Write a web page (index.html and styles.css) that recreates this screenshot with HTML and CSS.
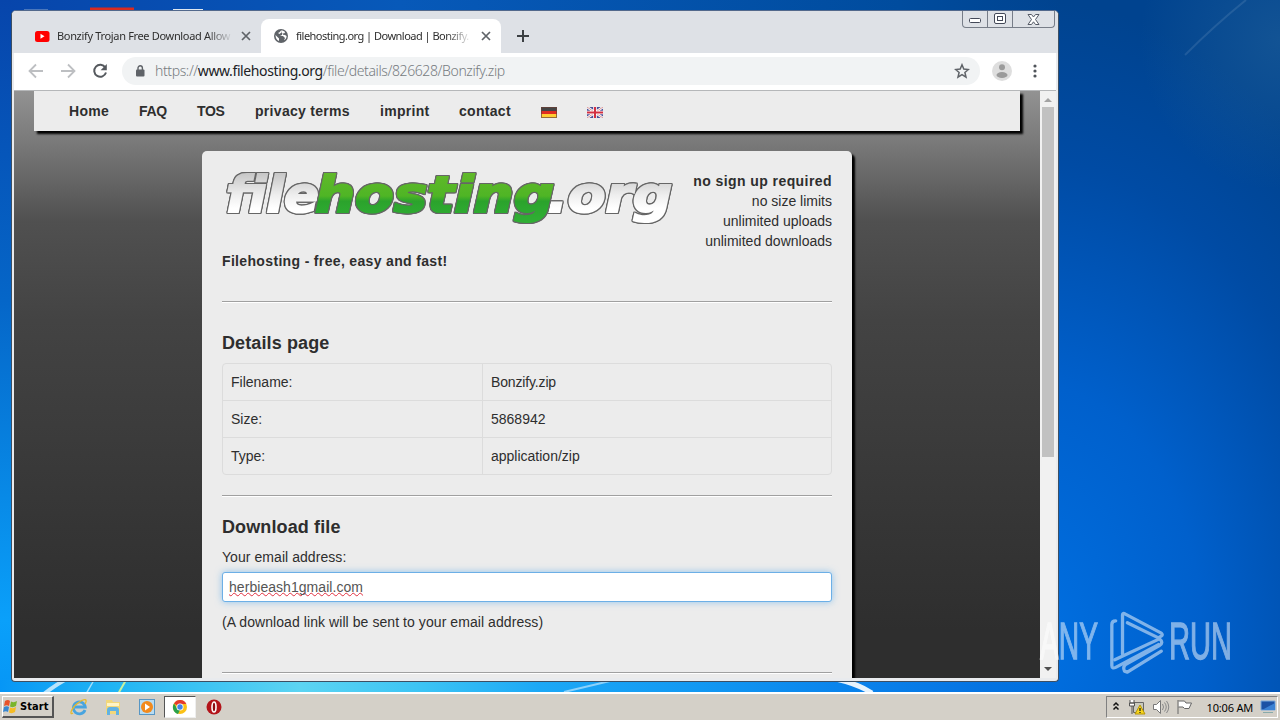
FILE: index.html
```
<!DOCTYPE html>
<html lang="en">
	<head>
		<meta charset="utf-8">
		<title>filehosting.org | Download | Bonzify.zip</title>
		<link rel="stylesheet" href="styles.css">
	</head>
	<body>
		<div class="desktop">
			<svg class="wallpaper" width="1280" height="692" viewBox="0 0 1280 692">
				<g fill="none" stroke="#fff">
					<path d="M44 694Q55 685 72 676" stroke-width="4" opacity=".7"/>
					<path d="M86 694L94 680" stroke-width="1.5" opacity=".6"/>
					<path d="M118 694L126 680" stroke="#c8f0a0" stroke-width="2"/>
					<path d="M564 692L610 681" stroke-width="2" opacity=".5"/>
					<path d="M836 679Q858 684 872 693" stroke-width="5" opacity=".9"/>
					<path d="M1185 55Q1215 25 1246 0" stroke-width="2" opacity=".1"/>
				</g>
				<path d="M24 10h24" stroke="#8fa9cc"/>
				<path d="M173 10h30" stroke="#dfe8f0" stroke-width="2"/>
				<path d="M90 9h44" stroke="#d92b20" stroke-width="3"/>
			</svg>
			<div class="window">
				<div class="titlebar">
					<div class="tab">
						<svg width="16" height="16" viewBox="0 0 16 16"><rect x="1" y="3" width="14.500" height="11" rx="2.500" fill="#f00"/><path d="M6.500 5.800v5l4-2.500z" fill="#fff"/></svg>
						<span class="tab-title first">Bonzify Trojan Free Download Allow</span>
						<svg width="10" height="10" viewBox="0 0 10 10"><path d="M1 1l8 8M9 1l-8 8" stroke="#5f6368" stroke-width="1.700"/></svg>
					</div>
					<div class="tab active">
						<svg width="16" height="16" viewBox="0 0 16 16"><circle cx="8" cy="8" r="7" fill="#5f6368"/><path d="M2.500 7l2.500 2.500 1 1v2.500c-2-.6-3.500-2.700-3.500-6zM8 2.500c2 0 3.300.6 4.200 1.800L11 5.500 9 5v2L7 8h3l2 2-1 2.300c1.800-1 2.600-2.400 2.600-4.300l-1.600-1-2-.3M8 2.500L6.500 4.200 5 5l1.500 1L9 4z" fill="#fff"/></svg>
						<span class="tab-title">filehosting.org | Download | Bonzify.</span>
						<svg class="tab-close" width="10" height="10" viewBox="0 0 10 10"><path d="M1 1l8 8M9 1l-8 8" stroke="#5f6368" stroke-width="1.700"/></svg>
					</div>
					<svg class="plus" width="12" height="12" viewBox="0 0 12 12"><path d="M6 0v12M0 6h12" stroke="#3c4043" stroke-width="2"/></svg>
					<div class="controls">
						<span class="ctl"><svg width="12" height="6"><rect x=".5" y=".5" width="11" height="4" rx="1" fill="#fff" stroke="#444958"/></svg></span>
						<span class="ctl"><svg width="12" height="12"><rect x=".5" y=".5" width="11" height="10" rx="1.500" fill="#fff" stroke="#444958"/><rect x="3.500" y="3.500" width="5" height="4" fill="#fff" stroke="#444958"/></svg></span>
						<span class="ctl close"><svg width="13" height="11" viewBox="0 0 13 11"><path d="M1 .5h3.500l2 2.500 2-2.500H12L8.500 5.500l3.500 5H8.500l-2-2.700-2 2.700H1l3.500-5z" fill="#fff" stroke="#555a66"/></svg></span>
					</div>
				</div>
				<div class="toolbar">
					<svg class="nav-icon" width="16" height="16" viewBox="0 0 16 16"><path d="M15 8H2M8 1.500L1.500 8 8 14.500" fill="none" stroke="#bdbfc2" stroke-width="1.800"/></svg>
					<svg class="nav-icon" width="16" height="16" viewBox="0 0 16 16"><path d="M1 8h13M8 1.500L14.500 8 8 14.500" fill="none" stroke="#bdbfc2" stroke-width="1.800"/></svg>
					<svg class="nav-icon" width="16" height="16" viewBox="0 0 16 16"><path d="M13.300 4.500A6 6 0 1 0 14 9.500" fill="none" stroke="#55595e" stroke-width="2"/><path d="M14.800 1v6.200H8.600z" fill="#55595e"/></svg>
					<div class="address">
						<svg width="10" height="12" viewBox="0 0 10 12"><rect x="1" y="4.500" width="8.500" height="7" rx="1" fill="#5f6368"/><path d="M3 5V3a2.200 2.200 0 0 1 4.400 0v2" fill="none" stroke="#5f6368" stroke-width="1.400"/></svg>
						<span class="url">https://<b>www.filehosting.org</b>/file/details/826628/Bonzify.zip</span>
						<svg class="star" width="16" height="16" viewBox="0 0 16 16"><path d="M8 1.800l1.800 4.300 4.600.4-3.500 3 1.100 4.600-4-2.500-4 2.500 1.100-4.600-3.500-3 4.600-.4z" fill="none" stroke="#5f6368" stroke-width="1.500"/></svg>
					</div>
					<svg class="avatar" width="20" height="20" viewBox="0 0 20 20"><circle cx="10" cy="10" r="10" fill="#dedede"/><circle cx="10" cy="6.300" r="3" fill="#9b9b9b"/><ellipse cx="10" cy="14" rx="5.500" ry="3" fill="#9b9b9b"/></svg>
					<svg class="more" width="4" height="14" viewBox="0 0 4 14"><g fill="#50545a"><circle cx="2" cy="2" r="1.600"/><circle cx="2" cy="7" r="1.600"/><circle cx="2" cy="12" r="1.600"/></g></svg>
				</div>
				<div class="viewport">
					<div class="page">
						<ul class="menu">
							<li class="m1">Home</li>
							<li class="m2">FAQ</li>
							<li class="m2">TOS</li>
							<li class="m4">privacy terms</li>
							<li class="m5">imprint</li>
							<li class="m6">contact</li>
							<li class="flag"><svg width="16" height="11"><path d="M0 0h16v4H0z" fill="#444"/><path d="M0 4h16v3H0z" fill="#e02c20"/><path d="M0 7h16v4H0z" fill="#fc3"/><rect x=".5" y=".5" width="15" height="10" fill="none" stroke="#6b4036" opacity=".7"/></svg></li>
							<li class="flag"><svg width="16" height="11" viewBox="0 0 16 11"><path d="M0 0h16v11H0z" fill="#4a4f96"/><path d="M0 0l16 11M16 0L0 11" stroke="#fff" stroke-width="2.500"/><path d="M0 0l16 11M16 0L0 11" stroke="#c77" stroke-width=".8"/><path d="M8 0v11M0 5.500h16" stroke="#fff" stroke-width="3.600"/><path d="M8 0v11M0 5.500h16" stroke="#d22f40" stroke-width="2"/></svg></li>
						</ul>
						<div class="content">
							<div class="head">
								<svg class="logo" width="455" height="60" viewBox="0 0 455 60">
									<defs>
										<linearGradient id="silver" gradientUnits="userSpaceOnUse" x1="0" y1="2" x2="0" y2="46"><stop offset="0" stop-color="#c6c6c6"/><stop offset=".5" stop-color="#eee"/><stop offset=".8" stop-color="#fff"/></linearGradient>
										<linearGradient id="green" gradientUnits="userSpaceOnUse" x1="0" y1="0" x2="0" y2="52"><stop offset="0" stop-color="#62b92a"/><stop offset=".48" stop-color="#4fb525"/><stop offset=".58" stop-color="#2ba32c"/><stop offset="1" stop-color="#30b035"/></linearGradient>
									</defs>
									<text class="logo-text" x="4" y="41" textLength="93" lengthAdjust="spacingAndGlyphs" fill="url(#silver)" stroke="url(#silver)">file</text>
									<text class="logo-text" x="325" y="41" textLength="125" lengthAdjust="spacingAndGlyphs" fill="url(#silver)" stroke="url(#silver)">.org</text>
									<text class="logo-text" x="93" y="41" textLength="239" lengthAdjust="spacingAndGlyphs" fill="url(#green)" stroke="url(#green)">hosting</text>
								</svg>
								<div class="claims">
									<strong>no sign up required</strong>
									<span>no size limits</span>
									<span>unlimited uploads</span>
									<span>unlimited downloads</span>
								</div>
							</div>
							<strong class="slogan">Filehosting - free, easy and fast!</strong>
							<hr>
							<h4 class="details-title">Details page</h4>
							<table class="details">
								<tr><td>Filename:</td><td class="name">Bonzify.zip</td></tr>
								<tr><td>Size:</td><td>5868942</td></tr>
								<tr><td>Type:</td><td>application/zip</td></tr>
							</table>
							<hr class="second">
							<h4>Download file</h4>
							<label for="email">Your email address:</label>
							<div class="email" id="email"><span>herbieash1gmail.com</span></div>
							<p class="hint">(A download link will be sent to your email address)</p>
							<hr class="last">
						</div>
					</div>
					<div class="scrollbar">
						<svg width="14" height="16"><path d="M3 11l4-4 4 4z" fill="#a3a3a3"/></svg>
						<div class="thumb"></div>
						<svg class="down" width="14" height="16"><path d="M3 5l4 4 4-4z" fill="#505050"/></svg>
					</div>
				</div>
			</div>
			<svg class="watermark" width="220" height="80" viewBox="0 0 220 80">
				<g class="watermark-text">
					<text x="1" y="53" textLength="58" lengthAdjust="spacingAndGlyphs">ANY</text>
					<text x="130" y="53" textLength="63" lengthAdjust="spacingAndGlyphs">RUN</text>
				</g>
				<g transform="translate(3 1.500) scale(.97 .95)" fill="none" stroke="#fff" stroke-width="3.400" stroke-linejoin="round" stroke-linecap="round">
					<path d="M76 14q-4 0-4 4v43q0 4 4 2l44-24"/><path d="M83 49V8q0-3 3-1l37 20q2 2 0 3l-3 2-32-16"/><path d="M75 55l46-22q5 4 0 7L86 60q-3 3-1 7l3 1 35-22"/>
				</g>
			</svg>
		</div>
		<div class="taskbar">
			<div class="start">
				<svg width="15" height="15" viewBox="0 0 15 15"><path d="M2 2q3-2 5 0L6 7Q4 5.500 1 7z" fill="#e8532b"/><path d="M8 2.500q3 1.500 6-.5l-1 5q-3 2-6 .5z" fill="#79b52d"/><path d="M1 8q3-1.500 5 0l-1 5q-2-1.500-5 0z" fill="#3887d0"/><path d="M7 8.500q3 1.500 6-.5l-1 5q-3 2-6 .5z" fill="#f6bc25"/></svg>
				<span>Start</span>
			</div>
			<div class="task"><svg width="18" height="18" viewBox="0 0 18 18"><path d="M15 12a6 6 0 1 1 .3-3H5" fill="none" stroke="#48a4df" stroke-width="2.800"/><path d="M3 15C-1 18 1 10 8 5s10-4 7 1" fill="none" stroke="#e5b92f" stroke-width="1.300"/></svg></div>
			<div class="task"><svg width="18" height="18" viewBox="0 0 18 18"><path d="M2 2h6l1 2h7v12H2z" fill="#f2d77a"/><path d="M3 5h12v3H3z" fill="#fff4c4"/><path d="M3 17v-5q0-3 3-3h6q3 0 3 3v5h-3v-4H6v4z" fill="#62b2e2"/></svg></div>
			<div class="task"><svg width="18" height="18" viewBox="0 0 18 18"><rect x="1.500" y="1.500" width="15" height="15" fill="#b8dcf2" stroke="#5796c4"/><circle cx="9" cy="9" r="6" fill="#f28a1d"/><path d="M7 5.500v7l5-3.500z" fill="#fff"/></svg></div>
			<div class="task open"><svg width="16" height="16" viewBox="0 0 16 16"><circle cx="8" cy="8" r="7" fill="#fbc116"/><path d="M8 8L2 4.400A7 7 0 0 1 14.300 5H8z" fill="#e33b2e"/><path d="M2 4.400L6 11l2 0-2 4A7 7 0 0 1 2 4.400z" fill="#2ba14b"/><circle cx="8" cy="8" r="3.500" fill="#fff"/><circle cx="8" cy="8" r="2.700" fill="#4285e8"/></svg></div>
			<div class="task"><svg width="16" height="16" viewBox="0 0 16 16"><circle cx="8" cy="8" r="7.500" fill="#b3141a"/><ellipse cx="8" cy="8" rx="2" ry="5" fill="#8e0d12" stroke="#fff" stroke-width="1.600"/></svg></div>
			<div class="tray">
				<svg width="8" height="12" viewBox="0 0 8 12"><path d="M1.500 4.500L4 2l2.500 2.500M1.500 8.500L4 6l2.500 2.500" fill="none" stroke="#111" stroke-width="1.500"/></svg>
				<svg class="net" width="18" height="16" viewBox="0 0 18 16"><path d="M5.500 3.500h10v10h-10z" fill="#c9c9bd" stroke="#666"/><path d="M2 1v3h4V1M1.500 4v3h5V4zM4 7v8" fill="#fff" stroke="#555"/><path d="M12 6l5 9H7z" fill="#f7d51d" stroke="#b59409"/><path d="M12 9v3M12 13v1" stroke="#222" stroke-width="1.300"/></svg>
				<svg class="sound" width="18" height="16" viewBox="0 0 18 16"><path d="M1.500 5.500h3l4-4v13l-4-4h-3z" fill="#fff" stroke="#777"/><path d="M10.500 5q2 3 0 6M12.500 3.500q3.500 4.500 0 9M14.500 2q4.500 6 0 12" fill="none" stroke="#888"/></svg>
				<svg class="action" width="18" height="16" viewBox="0 0 18 16"><path d="M2 1v14M2.500 2h6l1.500 2h5.500L13 9.500H8.500L7 8H2.500" fill="#fff" stroke="#666"/></svg>
				<span class="clock">10:06 AM</span>
				<svg width="16" height="14" viewBox="0 0 16 14"><path d="M1 1h14v9H1z" fill="#1c52a5" stroke="#7ba9dc"/><path d="M2 10L15 3v7z" fill="#3b82d4"/><path d="M3 12.500h10" stroke="#8aa"/></svg>
			</div>
		</div>
	</body>
</html>
```
FILE: styles.css
```
* {
  box-sizing: border-box;
}

body {
  margin: 0;
  width: 1280px;
  height: 720px;
  overflow: hidden;
  display: flex;
  flex-direction: column;
  font-family: "Liberation Sans", Arial, sans-serif;
  color: #2e2e2e;
}

ul {
  list-style: none;
  margin: 0;
  padding: 0;
}

svg {
  display: block;
  flex: none;
}

.desktop {
  height: 692px;
  position: relative;
  background:
    linear-gradient(90deg, #0696f6 0, #20b4f4 110px, #5cd4f2 300px, #3cc4f4 420px, #1ca8f6 540px, #1298f2 700px, #0a84ec 840px, #0676e4 960px, transparent 1060px) 0 680px / 1280px 12px no-repeat,
    linear-gradient(180deg, #0745ab 0, #0566c8 300px, #0aa0fa 620px, #0696f6 692px) 0 0 / 12px 692px no-repeat,
    linear-gradient(90deg, #0745ab 0, #0759b9 400px, #004c9e 900px, transparent 1060px) 0 0 / 1280px 12px no-repeat,
    radial-gradient(140px 150px at 1280px 40px, rgba(60, 120, 160, .3), transparent),
    radial-gradient(430px 640px at 1030px 640px, #0070e2 0, #0060cc 40%, #004ba4 75%, #00438f 100%);
}

.wallpaper {
  position: absolute;
  left: 0;
  top: 0;
}

.window {
  position: absolute;
  left: 11px;
  top: 10px;
  width: 1048px;
  height: 672px;
  border: 1px solid #3d4f63;
  border-top-color: #53698c;
  border-radius: 5px 5px 4px 4px;
  background: #e9ebee;
  padding: 0 2px 3px;
  display: flex;
  flex-direction: column;
}

.titlebar {
  height: 42px;
  margin: 0 -2px;
  padding: 8px 0 0 12px;
  background: #dee1e6;
  border-radius: 4px 4px 0 0;
  display: flex;
}

.tab {
  width: 237px;
  height: 34px;
  padding: 0 10px 0;
  display: flex;
  align-items: center;
  font-family: "Noto Sans", sans-serif;
  font-size: 11px;
}

.tab.active {
  width: 240px;
  background: #fff;
  border-radius: 8px 8px 0 0;
  padding-left: 12px;
}

.tab-title {
  width: 178px;
  margin: -2px 8px 0 7px;
  overflow: hidden;
  white-space: nowrap;
  letter-spacing: -.52px;
  -webkit-mask-image: linear-gradient(90deg, #000 150px, transparent 176px);
}

.tab-title.first {
  letter-spacing: -.33px;
}

.tab-close {
  margin-left: -1px;
}

.plus {
  margin: 11px 0 0 16px;
}

.controls {
  display: flex;
  height: 17px;
  margin: -8px 3px 0 auto;
  border: 1px solid #777d88;
  border-top: 0;
  border-radius: 0 0 4px 4px;
}

.ctl {
  width: 25px;
  display: flex;
  align-items: center;
  justify-content: center;
  border-right: 1px solid #777d88;
}

.ctl:first-child {
  padding-top: 4px;
}

.ctl.close {
  width: 41px;
  border-right: 0;
}

.toolbar {
  height: 38px;
  background: #fff;
  border-bottom: 1px solid #b5b7b9;
  display: flex;
  align-items: center;
  padding: 0 19px 1px 14px;
}

.nav-icon {
  margin-right: 16px;
}

.address {
  flex: 1;
  height: 28px;
  margin: 0 12px 0 -2px;
  padding: 0 10px 0 13px;
  border-radius: 14px;
  background: #f1f3f4;
  display: flex;
  align-items: center;
}

.url {
  margin: -1px 0 0 10px;
  font: 14px "Noto Sans", sans-serif;
  font-weight: 300;
  letter-spacing: -.39px;
  color: #777c81;
}

.url b {
  font-weight: 400;
  color: #202124;
}

.star {
  margin-left: auto;
}

.more {
  margin-left: 21px;
}

.viewport {
  flex: 1;
  min-height: 0;
  display: flex;
}

.page {
  width: 1026px;
  overflow: hidden;
  padding: 0 20px;
  background: linear-gradient(180deg, #929292 0, #7a7a7a 50px, #505050 130px, #434343 230px, #2e2e2e 540px, #2e2e2e);
}

.menu {
  height: 40px;
  padding-left: 35px;
  background: #ececec;
  box-shadow: 3px 3px 2px #000;
  display: flex;
  font-size: 14px;
  font-weight: bold;
  line-height: 40px;
  letter-spacing: .3px;
}

.menu li {
  margin-right: 30px;
  white-space: nowrap;
}

.menu .m1 {
  width: 40px;
}

.menu .m2 {
  width: 28px;
  letter-spacing: -.3px;
}

.menu .m4 {
  width: 95px;
}

.menu .m5 {
  width: 49px;
}

.menu .m6 {
  width: 52px;
}

.flag {
  padding-top: 16px;
}

.content {
  width: 650px;
  height: 700px;
  margin: 20px 0 0 168px;
  padding: 20px;
  border-radius: 5px;
  background: #ececec;
  box-shadow: 3px 3px 2px #000;
  font-size: 14px;
  line-height: 20px;
}

.head {
  display: flex;
  justify-content: space-between;
  height: 80px;
}

.logo {
  overflow: visible;
}

/* fat glyphs with a thin dark outline around them */
.logo-text {
  font: italic bold 49px "DejaVu Sans", sans-serif;
  stroke-width: 2px;
  filter: drop-shadow(1px 0 0 #666) drop-shadow(-1px 0 0 #666) drop-shadow(0 1px 0 #666) drop-shadow(0 -1px 0 #666);
}

.claims {
  display: flex;
  flex-direction: column;
  align-items: flex-end;
  white-space: nowrap;
}

.claims strong {
  letter-spacing: .43px;
}

.slogan {
  display: block;
  letter-spacing: .34px;
}

hr {
  margin: 30px 0;
  border: 0;
  height: 2px;
  border-top: 1px solid #a0a0a0;
  border-bottom: 1px solid #fff;
}

h4 {
  margin: 0;
  font-size: 18px;
  line-height: 20px;
  letter-spacing: .12px;
}

.details-title {
  margin-bottom: 10px;
}

.details {
  width: 610px;
  border: 1px solid #dcdcdc;
  border-radius: 4px;
  border-spacing: 0;
}

.details td {
  height: 37px;
  padding: 0 8px;
  border-top: 1px solid #dcdcdc;
}

.details tr:first-child td {
  height: 36px;
  border-top: 0;
}

.details td:first-child {
  width: 259px;
}

.details td + td {
  border-left: 1px solid #dcdcdc;
}

.details .name {
  letter-spacing: -.15px;
}

hr.second {
  margin: 20px 0;
}

label {
  display: block;
  margin: 10px 0 5px;
  letter-spacing: .06px;
}

.email {
  height: 30px;
  padding: 4px 6px;
  background: #fff;
  border: 1px solid #6cafe6;
  border-radius: 3px;
  box-shadow: 0 0 7px rgba(82, 168, 236, .6);
  color: #555;
  letter-spacing: .05px;
}

.email span {
  text-decoration: underline wavy #e03040 1px;
  text-underline-offset: 0;
  text-decoration-skip-ink: none;
}

.hint {
  margin: 10px 0 0;
  letter-spacing: .07px;
}

hr.last {
  margin: 40px 0 0;
}

.scrollbar {
  width: 16px;
  background: #f1f1f1;
  padding: 0 1px;
  display: flex;
  flex-direction: column;
}

.thumb {
  height: 350px;
  margin: 0 1px;
  background: #c1c1c1;
}

.down {
  margin-top: auto;
}

.watermark {
  position: absolute;
  left: 1039px;
  top: 606px;
  opacity: .5;
}

.watermark-text {
  font: 51px "Liberation Sans", Arial, sans-serif;
  fill: #fff;
  stroke: #fff;
  stroke-width: 1.3px;
}

.taskbar {
  height: 28px;
  background: #d4d0c8;
  border-top: 2px solid #fff;
  padding: 0 2px;
  display: flex;
  align-items: center;
}

.start {
  width: 52px;
  height: 22px;
  margin-right: 9px;
  display: flex;
  align-items: center;
  border: 1px solid #fff;
  border-right: 2px solid #555;
  border-bottom: 2px solid #555;
  font: bold 11px "DejaVu Sans Condensed", "DejaVu Sans", sans-serif;
  color: #000;
}

.start span {
  letter-spacing: .1px;
  margin-left: 2px;
}

.task {
  width: 32px;
  height: 22px;
  margin-right: 1.8px;
  display: flex;
  align-items: center;
  justify-content: center;
}

.task.open {
  background: #fff;
  border: 1px solid #555;
  border-right-color: #eee;
  border-bottom-color: #eee;
}

.tray {
  height: 22px;
  width: 172px;
  margin-left: auto;
  padding: 0 1px 0 5px;
  border: 1px solid #808080;
  border-right-color: #fff;
  border-bottom-color: #fff;
  display: flex;
  align-items: center;
}

.net {
  margin-left: 8px;
}

.sound,
.action {
  margin-left: 6px;
}

.clock {
  margin: 0 7px 0 auto;
  white-space: nowrap;
  font: 11px "Noto Sans", sans-serif;
  letter-spacing: -.2px;
  color: #000;
}
```
